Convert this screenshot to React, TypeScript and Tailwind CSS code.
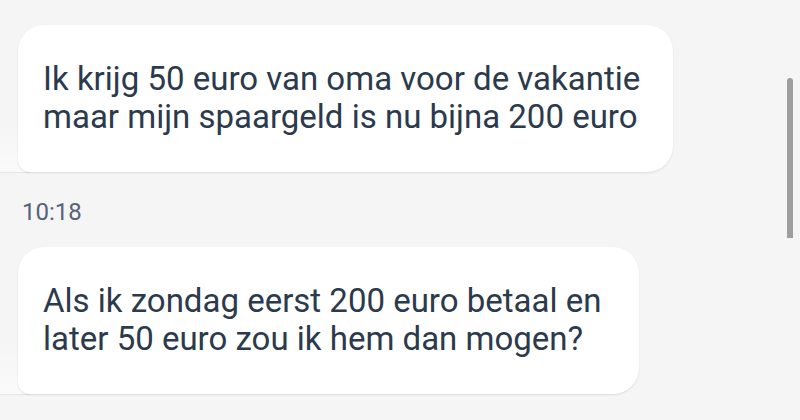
import React from 'react';

interface IBubbleProps {
  lines: string[];
  padRight: string;
}

function Bubble({ lines, padRight }: IBubbleProps) {
  return (
    <div className="relative ml-[18px] w-fit">
      <div className="absolute bottom-0 -left-[18px] h-[50px] w-[30px] bg-gradient-to-b from-[#f5f5f5] to-[#fafafa] shadow-[0_1px_1px_rgba(0,0,0,0.06)]" />
      <div
        className={`relative rounded-[26px] rounded-bl-[12px] bg-white pl-[25px] pt-[35px] pb-[36px] shadow-[0_1px_2px_rgba(0,0,0,0.1)] ${padRight}`}
      >
        {lines.map((line) => (
          <p
            key={line}
            className="whitespace-nowrap text-[33px] leading-[38px] text-[#2b3a4c]"
          >
            {line}
          </p>
        ))}
      </div>
    </div>
  );
}

export default function App() {
  return (
    <div
      className="relative h-[420px] w-[800px] overflow-hidden bg-[#f5f5f5] pt-[25px]"
      style={{ fontFamily: 'Roboto, "Noto Sans", sans-serif' }}
    >
      <Bubble
        padRight="pr-[33px]"
        lines={[
          'Ik krijg 50 euro van oma voor de vakantie',
          'maar mijn spaargeld is nu bijna 200 euro'
        ]}
      />

      <div className="mt-[26px] mb-[21px] pl-[22px] text-[24px] leading-[28px] text-[#56627a]">
        10:18
      </div>

      <Bubble
        padRight="pr-[38px]"
        lines={[
          'Als ik zondag eerst 200 euro betaal en',
          'later 50 euro zou ik hem dan mogen?'
        ]}
      />

      {/* scrollbar thumb */}
      <div className="absolute right-[7px] top-[78px] h-[160px] w-[6px] rounded-t-[3px] bg-[#9e9e9e]" />
    </div>
  );
}
